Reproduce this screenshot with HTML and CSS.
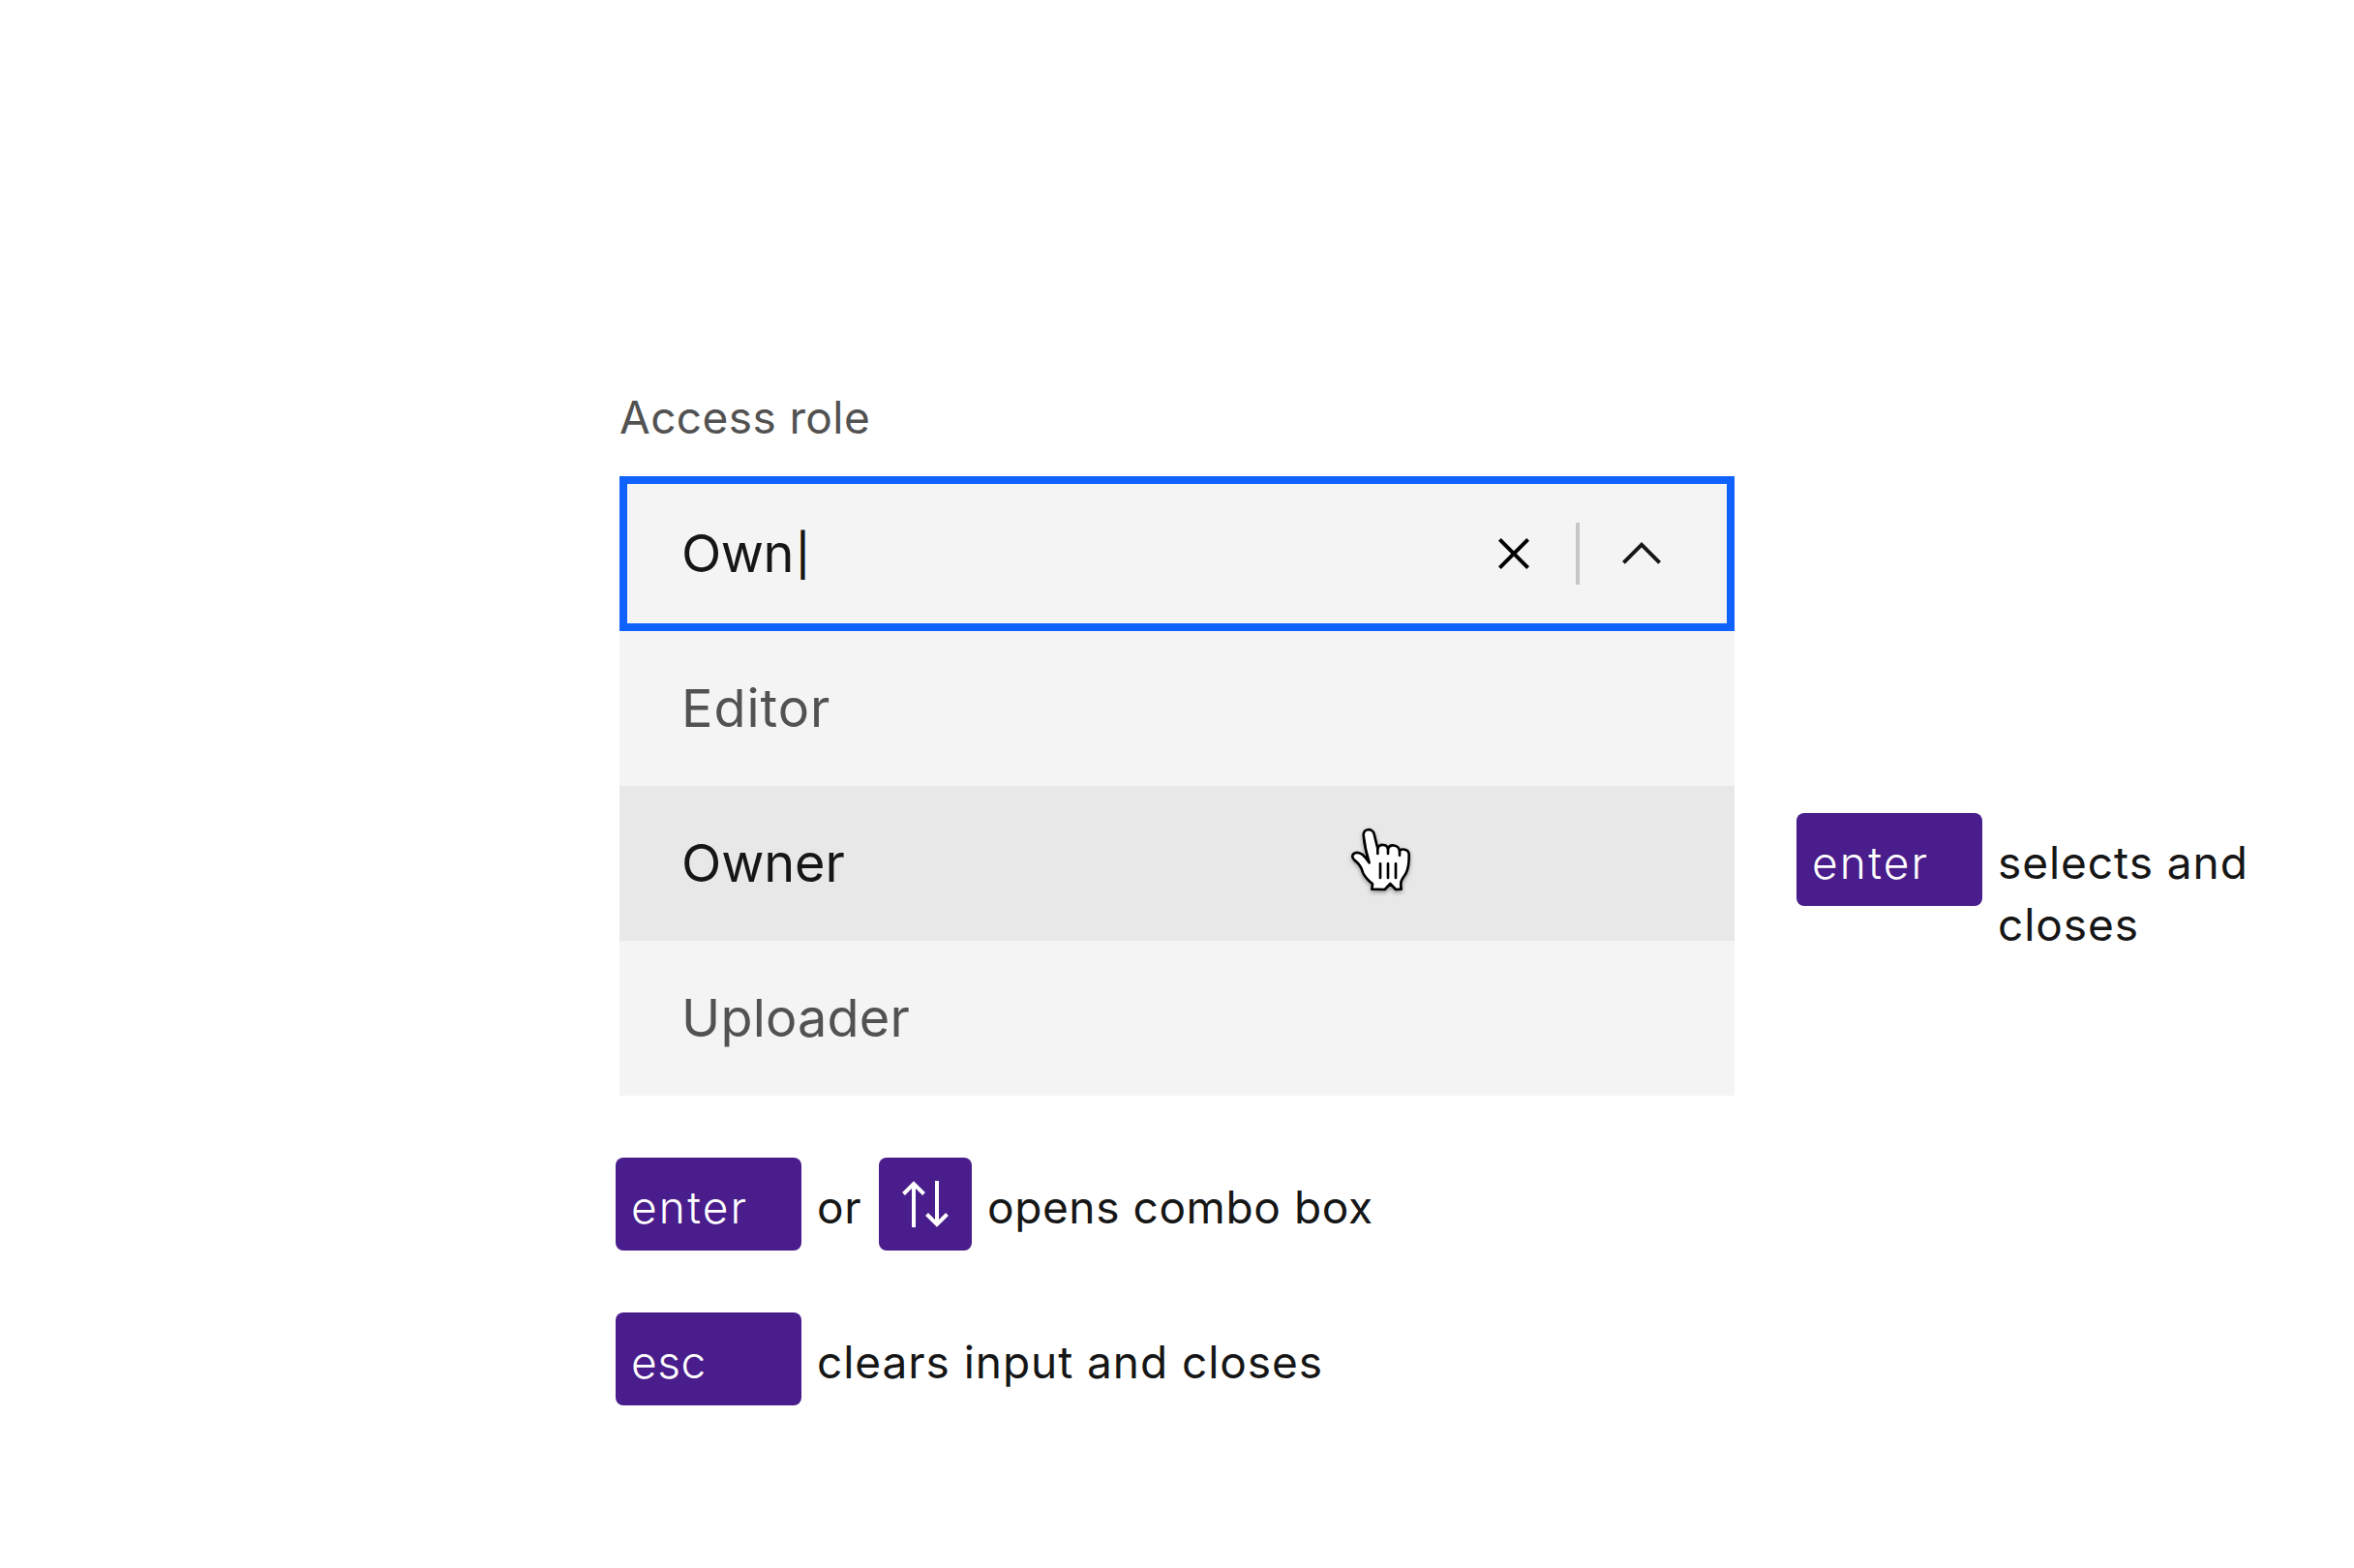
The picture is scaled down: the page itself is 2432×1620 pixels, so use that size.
FILE: index.html
```html
<!DOCTYPE html>
<html lang="en">
<head>
<meta charset="utf-8">
<title>Combo box keyboard interactions</title>
<link rel="stylesheet" href="styles.css">
</head>
<body>
<main class="canvas">
  <section class="demo">
    <div class="combo">
      <label class="combo-label">Access role</label>
      <div class="field">
        <span class="field-value">Own<span class="caret">|</span></span>
        <svg class="icon" viewBox="0 0 16 16"><path d="M12 4.7L11.3 4 8 7.3 4.7 4 4 4.7 7.3 8 4 11.3 4.7 12 8 8.7 11.3 12 12 11.3 8.7 8z"/></svg>
        <span class="divider"></span>
        <svg class="icon icon-chevron" viewBox="0 0 16 16"><path d="M8 5l5 5-.7.7L8 6.4l-4.3 4.3L3 10z"/></svg>
      </div>
      <ul class="menu">
        <li class="option option-editor">Editor</li>
        <li class="option option-active">Owner
          <svg class="pointer" viewBox="0 0 360 330">
            <path class="hand" d="M142 266L144 250C130 238 118 226 114 214C107 190 98 184 88 176C72 160 90 146 110 157C120 163 126 174 134 184C126 160 118 118 116 99C115 76 145 77 149 95C153 112 158 132 160 140C164 125 189 125 192 141C196 125 224 127 228 147C232 140 256 140 257 158C258 196 253 208 246 220C230 242 230 246 233 266L216 267L199 249L182 267Z"/>
            <path class="crease" d="M160 138V156M192 140V156M228 146V161M168 187V231M192 187V231M216 187V231"/>
          </svg>
        </li>
        <li class="option">Uploader</li>
      </ul>
    </div>
    <div class="hint hint-side">
      <kbd class="key">enter</kbd>
      <p class="hint-text hint-selects">selects and<br>closes</p>
    </div>
  </section>
  <section class="hints">
    <div class="hint">
      <kbd class="key">enter</kbd>
      <span class="hint-text hint-or">or</span>
      <kbd class="key key-square"><svg class="arrows" viewBox="0 0 48 48"><path d="M12 48V3M1.500 13.500L12 3l10.500 10.500M36 0v45M25.500 34.500L36 45l10.500-10.500"/></svg></kbd>
      <span class="hint-text">opens combo box</span>
    </div>
    <div class="hint">
      <kbd class="key key-esc">esc</kbd>
      <span class="hint-text hint-clears">clears input and closes</span>
    </div>
  </section>
</main>
</body>
</html>
```
FILE: styles.css
```css
* { box-sizing: border-box; }
body { margin: 0; background: #fff; color: #161616; font-family: Inter, "Liberation Sans", sans-serif; }
.canvas { width: 2432px; height: 1620px; padding: 396px 0 0 636px; overflow: hidden; }

.demo { display: flex; gap: 64px; padding-left: 4px; }
.combo { width: 1152px; }
.combo-label { display: block; height: 96px; font-size: 46px; line-height: 70px; letter-spacing: .4px; color: #525252; }
.field { display: flex; align-items: center; height: 160px; padding: 0 56px; border: 8px solid #0f62fe; background: #f4f4f4; }
.field-value { flex: 1; font-size: 54px; line-height: 144px; letter-spacing: -.5px; }
.caret { margin-left: 2px; font-size: 43px; font-weight: 500; line-height: 1; vertical-align: 2px; }
.icon { width: 64px; height: 64px; fill: #000; }
.icon-chevron { fill: #161616; }
.divider { width: 4px; height: 64px; margin: 0 32px; background: #c6c6c6; }

.menu { margin: 0; padding: 0; list-style: none; }
.option { position: relative; height: 160px; padding-left: 64px; background: #f4f4f4; color: #525252; font-size: 54px; line-height: 160px; letter-spacing: .2px; }
.option-editor { letter-spacing: 1px; }
.option-active { background: #e8e8e8; color: #161616; letter-spacing: -.1px; }
.pointer { position: absolute; left: 730px; top: 18px; width: 120px; height: 110px; filter: drop-shadow(0 2px 2px rgba(0, 0, 0, .35)); }
.hand { fill: #fff; stroke: #000; stroke-width: 8; stroke-linejoin: round; }
.crease { fill: none; stroke: #000; stroke-width: 8; stroke-linecap: round; }

.hints { display: flex; flex-direction: column; gap: 64px; padding-top: 64px; }
.hint { display: flex; gap: 16px; }
.hint-side { padding-top: 444px; }
.key { width: 192px; height: 96px; padding-left: 16px; border-radius: 8px; background: #491d8b; color: #fff; font: 350 46px/102px Inter, "Liberation Sans", sans-serif; letter-spacing: 2.2px; }
.key-esc { letter-spacing: .5px; }
.key-square { display: flex; align-items: center; justify-content: center; width: 96px; padding: 0; }
.arrows { width: 48px; height: 48px; fill: none; stroke: #fff; stroke-width: 4; }
.hint-text { margin: 0; padding-top: 19px; font-size: 46px; line-height: 64px; letter-spacing: .6px; white-space: nowrap; }
.hint-or { width: 48px; }
.hint-selects { letter-spacing: .95px; }
.hint-clears { letter-spacing: .95px; }
```
